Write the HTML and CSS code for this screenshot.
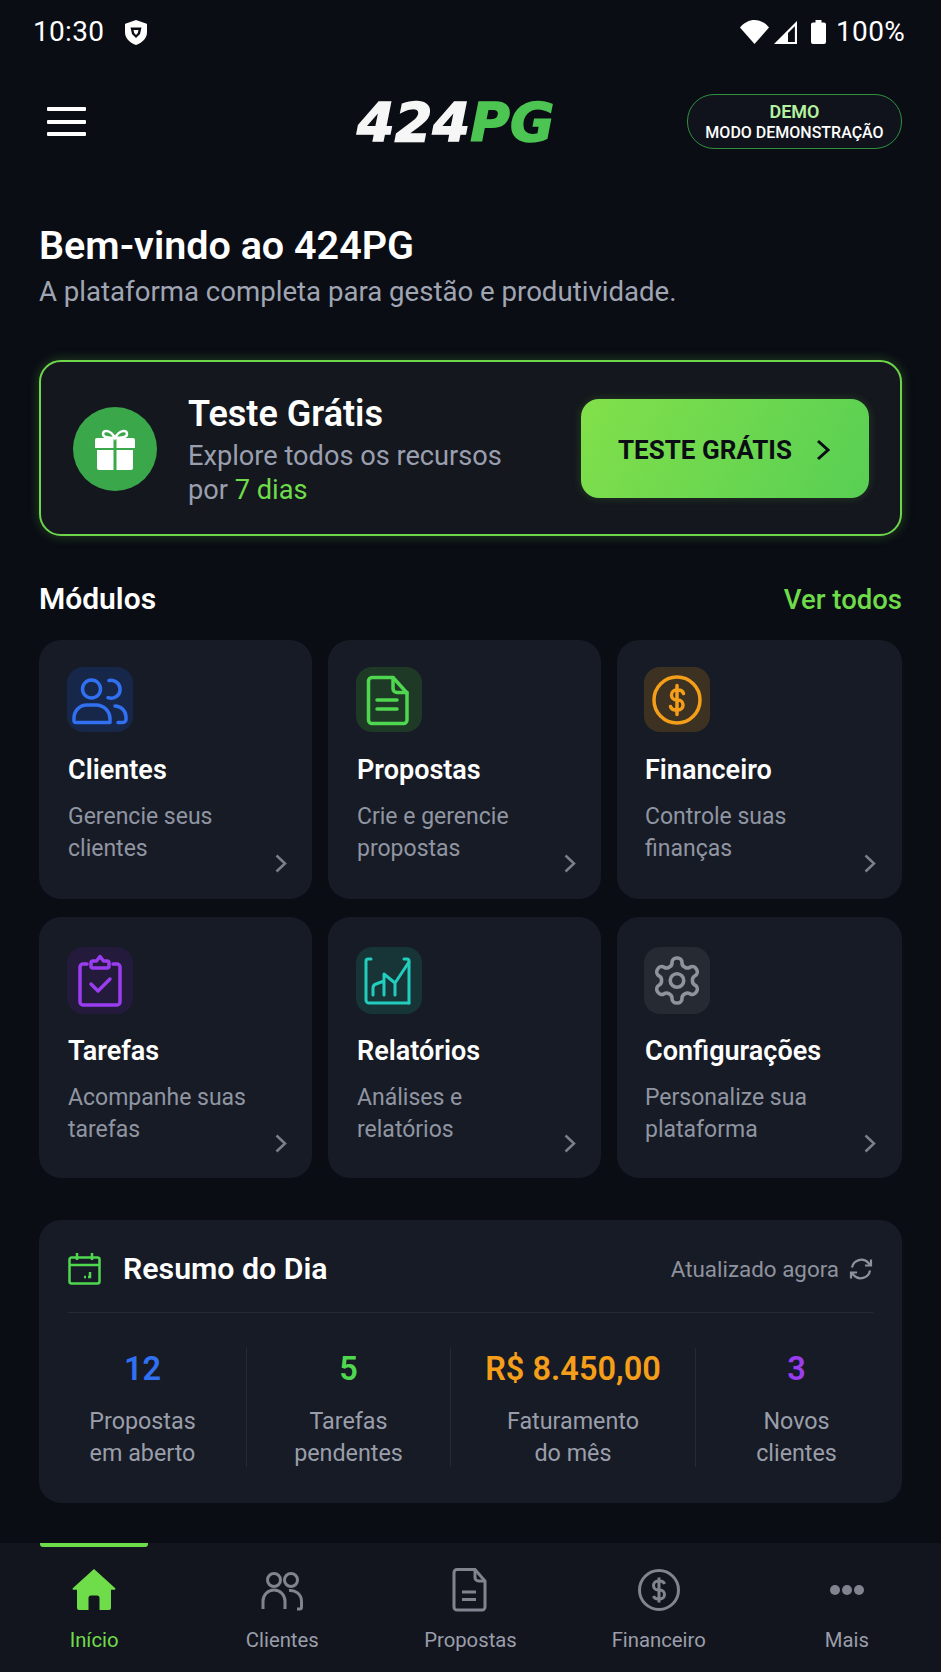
FILE: index.html
```html
<!DOCTYPE html>
<html lang="pt-BR">
<head>
<meta charset="utf-8">
<title>424PG</title>
<link rel="stylesheet" href="styles.css">
</head>
<body>
<div class="app">
  <div class="status">
    <div class="status-left">
      <span class="status-text">10:30</span>
      <svg class="shield" viewBox="0 0 22 25"><path fill="#fff" d="M11 0 L21 3.500 a1 1 0 0 1 1 1 V12 c0 6-4 10.500-11 13 C4 22.500 0 18 0 12 V4.500 a1 1 0 0 1 1-1z"/><path fill="#0a0d14" d="M5.500 7.500 H16.500 L15 14 L11 18 L7 14z"/><path fill="#fff" d="M8.500 10 H13.500 L12.800 13 L11 15 L9.200 13z"/></svg>
    </div>
    <div class="status-right">
      <svg class="wifi" viewBox="0 0 29 24"><path fill="#fff" d="M0 7.500 C8-2.500 21-2.500 29 7.500 L14.500 24z"/></svg>
      <svg class="signal" viewBox="0 0 23 23"><path fill="none" stroke="#fff" stroke-width="2.200" d="M22 2.500 V22 H2.500z"/><path fill="#fff" d="M1 23 L14 10 V23z"/></svg>
      <svg class="battery" viewBox="0 0 15 24"><path fill="#fff" d="M4.500 0 h6 v2.500 h2.500 a2 2 0 0 1 2 2 V22 a2 2 0 0 1-2 2 H2 a2 2 0 0 1-2-2 V4.500 a2 2 0 0 1 2-2 h2.500z"/></svg>
      <span class="status-text">100%</span>
    </div>
  </div>

  <header class="topbar">
    <div class="burger"><span></span><span></span><span></span></div>
    <div class="logo"><span class="logo-w">424</span><span class="logo-g">PG</span></div>
    <div class="demo"><span class="demo-a">DEMO</span><span class="demo-b">MODO DEMONSTRAÇÃO</span></div>
  </header>

  <main class="main">
    <section class="hero">
      <h1 class="hero-title">Bem-vindo ao 424PG</h1>
      <p class="hero-sub">A plataforma completa para gestão e produtividade.</p>
    </section>

    <section class="trial">
      <div class="gift">
        <svg viewBox="1 0 40 41" class="gift-icon"><path fill="none" stroke="#fff" stroke-width="2.500" d="M21 9 C17 1 9 0 9 5 C9 9 16 9 21 9 C26 9 33 9 33 5 C33 0 25 1 21 9z"/><path fill="#fff" d="M1 11 a2 2 0 0 1 2-2 H19.500 V19 H1z M22.500 9 H39 a2 2 0 0 1 2 2 V19 H22.500z M3 21 H19.500 V41 H5 a2 2 0 0 1-2-2z M22.500 21 H39 V39 a2 2 0 0 1-2 2 H22.500z"/></svg>
      </div>
      <div class="trial-text">
        <h2 class="trial-title">Teste Grátis</h2>
        <p class="trial-sub">Explore todos os recursos<br>por <em class="trial-days">7 dias</em></p>
      </div>
      <div class="trial-btn">
        <span>TESTE GRÁTIS</span>
        <svg class="trial-chev" viewBox="0 0 14 22"><path fill="none" stroke="#0a0d14" stroke-width="3" d="M2 2 L12 11 L2 20"/></svg>
      </div>
    </section>

    <div class="section-head">
      <h2 class="section-title">Módulos</h2>
      <span class="section-link">Ver todos</span>
    </div>

    <section class="grid">
      <article class="card">
        <div class="tile tile-blue">
          <svg viewBox="0 0 66 65" class="ico stroke-blue"><circle cx="24.500" cy="22" r="9"/><path d="M42 13.500 a9 9 0 1 1 -1 17.200"/><path d="M9 55.500 a2 2 0 0 1-2-2 V51 a13 13 0 0 1 13-13 h9 a14 14 0 0 1 14 14 v3.500z"/><path d="M48 39 a11 11 0 0 1 11 11 v2.500 a3 3 0 0 1-3 3 h-5"/></svg>
        </div>
        <h3 class="card-title">Clientes</h3>
        <p class="card-sub">Gerencie seus<br>clientes</p>
        <svg class="card-chev" viewBox="0 0 12 19"><path d="M1.500 1.500 L10 9.500 L1.500 17.500"/></svg>
      </article>
      <article class="card">
        <div class="tile tile-green">
          <svg viewBox="0 0 66 65" class="ico stroke-green"><path d="M16 10.500 H37 L51 26 V53 a3.500 3.500 0 0 1-3.500 3.500 H16 a3.500 3.500 0 0 1-3.500-3.500 V14 a3.500 3.500 0 0 1 3.500-3.500z"/><path d="M37 10.500 V21.500 a4 4 0 0 0 4 4 H51"/><path d="M21 33 H41 M21 42 H41"/></svg>
        </div>
        <h3 class="card-title">Propostas</h3>
        <p class="card-sub">Crie e gerencie<br>propostas</p>
        <svg class="card-chev" viewBox="0 0 12 19"><path d="M1.500 1.500 L10 9.500 L1.500 17.500"/></svg>
      </article>
      <article class="card">
        <div class="tile tile-amber">
          <svg viewBox="0 0 66 65" class="ico stroke-amber"><circle cx="33" cy="33" r="23"/><path d="M39.500 26.500 a5.500 4.500 0 0 0-5.500-3.500 h-1.500 a5 5 0 0 0 0 10 h1.500 a5 5 0 0 1 0 10 h-2 a5.500 4.500 0 0 1-5.500-3.500 M33 18.500 V47.500"/></svg>
        </div>
        <h3 class="card-title">Financeiro</h3>
        <p class="card-sub">Controle suas<br>finanças</p>
        <svg class="card-chev" viewBox="0 0 12 19"><path d="M1.500 1.500 L10 9.500 L1.500 17.500"/></svg>
      </article>
      <article class="card card-low">
        <div class="tile tile-low tile-purple">
          <svg viewBox="0 0 66 67" class="ico stroke-purple"><path d="M20 17 H16 a3 3 0 0 0-3 3 V55 a3 3 0 0 0 3 3 H50 a3 3 0 0 0 3-3 V20 a3 3 0 0 0-3-3 H46"/><path d="M24 16 a2 2 0 0 1 2-2 h3.500 l3.500-4.500 l3.500 4.500 H40 a2 2 0 0 1 2 2 v3 a2 2 0 0 1-2 2 H26 a2 2 0 0 1-2-2z"/><path d="M24 37 L31 44 L43 32"/></svg>
        </div>
        <h3 class="card-title">Tarefas</h3>
        <p class="card-sub">Acompanhe suas<br>tarefas</p>
        <svg class="card-chev" viewBox="0 0 12 19"><path d="M1.500 1.500 L10 9.500 L1.500 17.500"/></svg>
      </article>
      <article class="card card-low">
        <div class="tile tile-low tile-teal">
          <svg viewBox="0 0 66 67" class="ico stroke-teal"><path d="M15 12 H12 a2 2 0 0 0-2 2 V53 a3 3 0 0 0 3 3 H53"/><path d="M48 12 H51 a2 2 0 0 1 2 2 V56"/><path d="M17 48 V41 q0-3 3-4 l8-3 M28 48 V27 L39 36 L53 15 M39 48 V36"/></svg>
        </div>
        <h3 class="card-title">Relatórios</h3>
        <p class="card-sub">Análises e<br>relatórios</p>
        <svg class="card-chev" viewBox="0 0 12 19"><path d="M1.500 1.500 L10 9.500 L1.500 17.500"/></svg>
      </article>
      <article class="card card-low">
        <div class="tile tile-low tile-gray">
          <svg viewBox="0 0 24 24" class="ico ico-gear"><path d="M12.220 2h-.440a2 2 0 0 0-2 2v.180a2 2 0 0 1-1 1.730l-.430.250a2 2 0 0 1-2 0l-.150-.080a2 2 0 0 0-2.730.730l-.220.380a2 2 0 0 0 .730 2.730l.150.100a2 2 0 0 1 1 1.720v.510a2 2 0 0 1-1 1.740l-.150.090a2 2 0 0 0-.730 2.730l.220.380a2 2 0 0 0 2.730.730l.150-.080a2 2 0 0 1 2 0l.430.250a2 2 0 0 1 1 1.730V20a2 2 0 0 0 2 2h.440a2 2 0 0 0 2-2v-.180a2 2 0 0 1 1-1.730l.430-.250a2 2 0 0 1 2 0l.150.080a2 2 0 0 0 2.730-.730l.220-.390a2 2 0 0 0-.730-2.730l-.150-.080a2 2 0 0 1-1-1.740v-.500a2 2 0 0 1 1-1.740l.150-.090a2 2 0 0 0 .730-2.730l-.220-.380a2 2 0 0 0-2.730-.730l-.150.080a2 2 0 0 1-2 0l-.430-.250a2 2 0 0 1-1-1.730V4a2 2 0 0 0-2-2z"/><circle cx="12" cy="12" r="3"/></svg>
        </div>
        <h3 class="card-title">Configurações</h3>
        <p class="card-sub">Personalize sua<br>plataforma</p>
        <svg class="card-chev" viewBox="0 0 12 19"><path d="M1.500 1.500 L10 9.500 L1.500 17.500"/></svg>
      </article>
    </section>

    <section class="summary">
      <div class="summary-head">
        <svg class="cal" viewBox="0 0 33 33"><path d="M3.500 5.500 H29.500 a2 2 0 0 1 2 2 V29.500 a2 2 0 0 1-2 2 H3.500 a2 2 0 0 1-2-2 V7.500 a2 2 0 0 1 2-2z M1.500 13 H31.500 M9 1 V8 M24 1 V8"/><path d="M16 25 h2 M22 20 v5 h-2"/></svg>
        <h2 class="summary-title">Resumo do Dia</h2>
        <span class="summary-time">Atualizado agora</span>
        <svg class="refresh" viewBox="0 0 24 24"><path d="M3 10.500 A9.500 9.500 0 0 1 19.500 6 L22 8.500 M22 2.500 V8.500 H16 M21 13.500 A9.500 9.500 0 0 1 4.500 18 L2 15.500 M2 21.500 V15.500 H8"/></svg>
      </div>
      <div class="stats">
        <div class="stat"><div class="stat-val val-blue">12</div><div class="stat-lab">Propostas<br>em aberto</div></div>
        <div class="stat"><div class="stat-val val-green">5</div><div class="stat-lab">Tarefas<br>pendentes</div></div>
        <div class="stat"><div class="stat-val val-amber">R$ 8.450,00</div><div class="stat-lab">Faturamento<br>do mês</div></div>
        <div class="stat"><div class="stat-val val-purple">3</div><div class="stat-lab">Novos<br>clientes</div></div>
      </div>
    </section>
  </main>

  <nav class="nav">
    <span class="nav-ind"></span>
    <div class="nav-item nav-on">
      <svg class="nav-ico" viewBox="0 0 44 44"><path fill="#6fdc4a" fill-rule="evenodd" d="M22 1 L43 20 a1 1 0 0 1-.7 1.800 H39 V40 a2 2 0 0 1-2 2 H7 a2 2 0 0 1-2-2 V21.800 H1.700 A1 1 0 0 1 1 20z M16.500 42 H27.500 V30 a2.500 2.500 0 0 0-2.500-2.500 H19 a2.500 2.500 0 0 0-2.500 2.500z"/></svg>
      <span>Início</span>
    </div>
    <div class="nav-item">
      <svg class="nav-ico nav-line" viewBox="0 0 44 44"><circle cx="14" cy="12" r="6.500"/><circle cx="31" cy="12" r="6.500"/><path d="M3 41 V33 a11 11 0 0 1 22 0 V41"/><path d="M29 22.500 a11 11 0 0 1 12.500 10.500 V39 a2 2 0 0 1-2 2 H37"/></svg>
      <span>Clientes</span>
    </div>
    <div class="nav-item">
      <svg class="nav-ico nav-line" viewBox="0 0 44 44"><path d="M9 1.500 H27 L37 13 V39 a3 3 0 0 1-3 3 H9 a3 3 0 0 1-3-3 V4.500 a3 3 0 0 1 3-3z"/><path d="M27 1.500 V9.500 a3.500 3.500 0 0 0 3.500 3.500 H37"/><path d="M14 24 H28 M14 31.500 H28"/></svg>
      <span>Propostas</span>
    </div>
    <div class="nav-item">
      <svg class="nav-ico nav-line" viewBox="0 0 44 44"><circle cx="22" cy="22" r="19.500"/><path d="M27.500 16 a5 4 0 0 0-5-3 h-1.500 a4.500 4.500 0 0 0 0 9 h2 a4.500 4.500 0 0 1 0 9 h-1.500 a5 4 0 0 1-5-3 M22 9.500 V34.500"/></svg>
      <span>Financeiro</span>
    </div>
    <div class="nav-item">
      <svg class="nav-ico" viewBox="0 0 44 44"><circle cx="10" cy="22" r="5" fill="#80848f"/><circle cx="22" cy="22" r="5" fill="#80848f"/><circle cx="34" cy="22" r="5" fill="#80848f"/></svg>
      <span>Mais</span>
    </div>
  </nav>
</div>
</body>
</html>
```

FILE: styles.css
```css
* { box-sizing: border-box; }
html, body { margin: 0; padding: 0; }
body {
  background: #0a0d14;
  color: #fff;
  font-family: Roboto, "Noto Sans", sans-serif;
}
h1, h2, h3, p { margin: 0; }

.app {
  width: 941px;
  height: 1672px;
  display: flex;
  flex-direction: column;
  overflow: hidden;
  background: #0a0d14;
}

/* status bar */
.status {
  height: 64px;
  flex: none;
  padding: 0 36px 0 33px;
  display: flex;
  align-items: center;
  justify-content: space-between;
}
.status-left, .status-right { display: flex; align-items: center; }
.status-text { font-size: 28px; line-height: 32px; letter-spacing: .3px; }
.shield { width: 22px; height: 25px; margin-left: 21px; }
.wifi { width: 29px; height: 24px; }
.signal { width: 23px; height: 23px; margin-left: 5px; }
.battery { width: 15px; height: 24px; margin: 0 10px 0 14px; }

/* header */
.topbar {
  height: 115px;
  flex: none;
  padding: 0 39px 0 47px;
  display: flex;
  align-items: center;
}
.burger { width: 39px; display: flex; flex-direction: column; gap: 8.500px; }
.burger span { height: 4px; background: #fff; border-radius: 1px; }
.logo {
  margin-left: 271px;
  padding-top: 3px;
  font-family: "DejaVu Sans", sans-serif;
  font-weight: 700;
  font-style: italic;
  font-size: 54px;
  line-height: 50px;
  letter-spacing: .2px;
  -webkit-text-stroke: 1.500px currentColor;
}
.logo-w { color: #f6f6f6; }
.logo-g { color: #4cc552; }
.demo {
  margin-left: auto;
  width: 215px;
  height: 55px;
  border: 1.500px solid #2f9140;
  border-radius: 27px;
  background: #10131b;
  display: flex;
  flex-direction: column;
  align-items: center;
  justify-content: center;
}
.demo-a { font-size: 18px; line-height: 21px; font-weight: 600; color: #b5f2a0; }
.demo-b { font-size: 16px; line-height: 21px; font-weight: 500; color: #fff; }

.main { flex: 1; padding: 0 39px; min-height: 0; }

/* hero */
.hero { padding-top: 45px; }
.hero-title { font-size: 39.500px; line-height: 44px; font-weight: 600; }
.hero-sub { margin-top: 6px; font-size: 27.600px; line-height: 36px; color: #a0a5b3; }

/* trial */
.trial {
  margin-top: 50px;
  height: 176px;
  padding: 0 31px 0 32px;
  border: 2px solid #6ed64a;
  border-radius: 22px;
  background: #14171d;
  box-shadow: 0 0 12px rgba(110, 214, 74, .28);
  display: flex;
  align-items: center;
}
.gift {
  width: 84px;
  height: 84px;
  flex: none;
  margin-top: 2px;
  border-radius: 50%;
  background: #3aa84a;
  display: flex;
  align-items: center;
  justify-content: center;
}
.gift-icon { width: 42px; height: 41px; }
.trial-text { flex: 1; padding-top: 3px; margin-left: 31px; }
.trial-title { font-size: 36px; line-height: 44px; font-weight: 600; }
.trial-sub { margin-top: 3px; font-size: 27.200px; line-height: 34px; color: #9a9fb0; }
.trial-days { font-style: normal; color: #6edc4a; }
.trial-btn {
  width: 288px;
  height: 99px;
  flex: none;
  border-radius: 18px;
  background: linear-gradient(120deg, #82e04a, #58cf54);
  box-shadow: 0 0 10px rgba(110, 214, 74, .2);
  color: #0a0d14;
  font-size: 26px;
  font-weight: 700;
  display: flex;
  align-items: center;
  padding: 3px 0 0 37px;
}
.trial-chev { width: 14px; height: 22px; margin-left: 24px; }

/* modules */
.section-head {
  margin-top: 45px;
  height: 36px;
  display: flex;
  align-items: center;
  justify-content: space-between;
}
.section-title { font-size: 30px; line-height: 36px; font-weight: 600; }
.section-link { font-size: 27.500px; font-weight: 500; color: #6edc4a; }

.grid {
  margin-top: 23px;
  display: grid;
  grid-template-columns: 273fr 273fr 285fr;
  column-gap: 16px;
  row-gap: 18px;
}
.card {
  position: relative;
  height: 259px;
  padding: 27px 28px 0 29px;
  border-radius: 22px;
  background: #171b25;
}
.card:nth-child(3n) { padding-left: 28px; }
.card-low { height: 261px; padding-top: 30px; }
.tile { width: 66px; height: 65px; margin-left: -1px; border-radius: 16px; }
.tile-low { height: 67px; }
.tile-blue { background: #17274a; }
.tile-green { background: #1e3a27; }
.tile-amber { background: #3d3222; }
.tile-purple { background: #241a3c; }
.tile-teal { background: #173537; }
.tile-gray { background: #262a33; }
.ico { display: block; width: 100%; height: 100%; fill: none; stroke-width: 3.500; stroke-linecap: round; stroke-linejoin: round; }
.stroke-blue { stroke: #3170f0; }
.stroke-green { stroke: #4fd84f; }
.stroke-amber { stroke: #f59e1a; }
.stroke-purple { stroke: #9a3df0; }
.stroke-teal { stroke: #22cdbd; stroke-width: 3; }
.ico-gear { stroke: #8f939e; stroke-width: 1.600; padding: 6px; }
.card-title { margin-top: 20px; font-size: 27px; line-height: 36px; font-weight: 600; }
.card-low .card-title { margin-top: 19px; }
.card-sub { margin-top: 13px; font-size: 23px; line-height: 32px; color: #9095a2; }
.card-chev {
  position: absolute;
  right: 25px;
  bottom: 26px;
  width: 12px;
  height: 19px;
  fill: none;
  stroke: #7b7f8a;
  stroke-width: 2.500;
}
.card:nth-child(3n) .card-chev { right: 26px; }
.card-low .card-chev { bottom: 25px; }

/* summary */
.summary {
  margin-top: 42px;
  height: 283px;
  padding-top: 31px;
  border-radius: 22px;
  background: #171b25;
}
.summary-head {
  margin: 0 29px;
  height: 62px;
  padding-bottom: 26px;
  border-bottom: 1px solid #262a35;
  display: flex;
  align-items: center;
}
.cal { width: 33px; height: 33px; fill: none; stroke: #4fd84f; stroke-width: 2.500; }
.summary-title { margin-left: 22px; font-size: 30.300px; line-height: 36px; font-weight: 600; }
.summary-time { margin-left: auto; font-size: 22.400px; color: #8e929e; }
.refresh { width: 24px; height: 24px; margin-left: 10px; fill: none; stroke: #8e929e; stroke-width: 2.200; }
.stats {
  margin-top: 35px;
  display: grid;
  grid-template-columns: 207px 204px 245px 202px;
}
.stat { text-align: center; height: 119px; border-left: 1px solid #262a35; }
.stat:first-child { border-left: 0; }
.stat-val { font-size: 32.500px; line-height: 42px; font-weight: 600; }
.val-blue { color: #3170f0; }
.val-green { color: #4fd84f; }
.val-amber { color: #f59e1a; }
.val-purple { color: #9a3df0; }
.stat-lab { margin-top: 15px; font-size: 23.300px; line-height: 32px; color: #9a9eaa; }

/* bottom nav */
.nav {
  position: relative;
  flex: none;
  height: 129px;
  background: #12151e;
  display: grid;
  grid-template-columns: repeat(5, 1fr);
}
.nav-ind {
  position: absolute;
  left: 40px;
  top: 0;
  width: 108px;
  height: 4px;
  background: #6edc4a;
  border-radius: 0 0 3px 3px;
}
.nav-item {
  display: flex;
  flex-direction: column;
  align-items: center;
  padding-top: 25px;
  font-size: 20.300px;
  line-height: 26px;
  color: #9a9eaa;
}
.nav-on { color: #6edc4a; }
.nav-ico { width: 44px; height: 44px; margin-bottom: 15px; }
.nav-line { fill: none; stroke: #80848f; stroke-width: 3; }
```
